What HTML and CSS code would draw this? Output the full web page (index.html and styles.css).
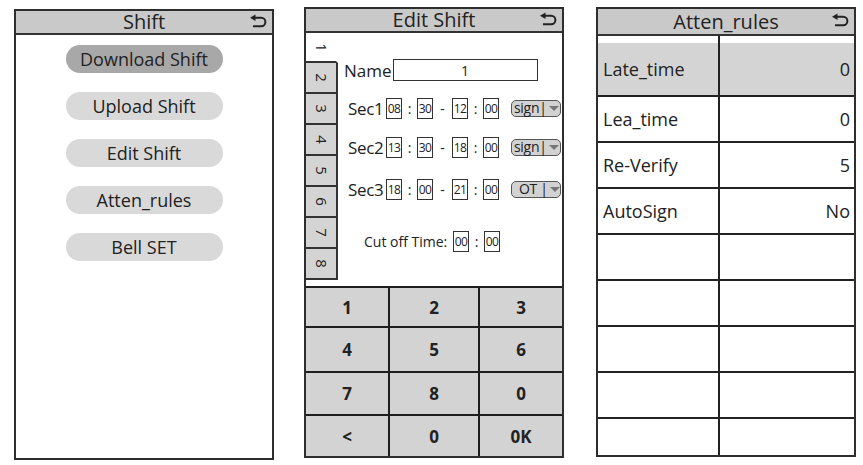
FILE: index.html
```html
<!DOCTYPE html>
<html>
<head>
<meta charset="utf-8">
<link rel="stylesheet" href="styles.css">
</head>
<body>
<div class="screens">
  <section class="panel panel-left">
    <header class="head">
      <span class="title">Shift</span>
      <svg class="back" viewBox="0 0 17 13" width="17" height="13"><path d="M4.5 2.8 H11.2 A4.2 4.2 0 0 1 11.2 11.2 H3" fill="none" stroke="#222" stroke-width="2"/><polygon points="0,2.8 5.5,-0.4 5.5,6" fill="#222"/></svg>
    </header>
    <div class="menu">
      <div class="pill selected">Download Shift</div>
      <div class="pill">Upload Shift</div>
      <div class="pill">Edit Shift</div>
      <div class="pill">Atten_rules</div>
      <div class="pill">Bell SET</div>
    </div>
  </section>

  <section class="panel panel-mid">
    <header class="head">
      <span class="title">Edit Shift</span>
      <svg class="back" viewBox="0 0 17 13" width="17" height="13"><path d="M4.5 2.8 H11.2 A4.2 4.2 0 0 1 11.2 11.2 H3" fill="none" stroke="#222" stroke-width="2"/><polygon points="0,2.8 5.5,-0.4 5.5,6" fill="#222"/></svg>
    </header>
    <div class="edit-body">
      <div class="tabs">
        <div class="tab active"><span>1</span></div>
        <div class="tab"><span>2</span></div>
        <div class="tab"><span>3</span></div>
        <div class="tab"><span>4</span></div>
        <div class="tab"><span>5</span></div>
        <div class="tab"><span>6</span></div>
        <div class="tab"><span>7</span></div>
        <div class="tab"><span>8</span></div>
      </div>
      <div class="form">
        <div class="row row-name">
          <span class="lbl">Name</span>
          <div class="name-box">1</div>
        </div>
        <div class="row row-sec1">
          <span class="lbl sec">Sec1</span>
          <span class="tbox">08</span><span class="sep">:</span><span class="tbox">30</span><span class="dash">-</span><span class="tbox">12</span><span class="sep">:</span><span class="tbox">00</span>
          <span class="drop"><span class="drop-txt">sign|</span><span class="tri"></span></span>
        </div>
        <div class="row row-sec2">
          <span class="lbl sec">Sec2</span>
          <span class="tbox">13</span><span class="sep">:</span><span class="tbox">30</span><span class="dash">-</span><span class="tbox">18</span><span class="sep">:</span><span class="tbox">00</span>
          <span class="drop"><span class="drop-txt">sign|</span><span class="tri"></span></span>
        </div>
        <div class="row row-sec3">
          <span class="lbl sec">Sec3</span>
          <span class="tbox">18</span><span class="sep">:</span><span class="tbox">00</span><span class="dash">-</span><span class="tbox">21</span><span class="sep">:</span><span class="tbox">00</span>
          <span class="drop"><span class="drop-txt ot">OT |</span><span class="tri"></span></span>
        </div>
        <div class="row row-cut">
          <span class="cut-lbl">Cut off Time:</span>
          <span class="tbox">00</span><span class="sep">:</span><span class="tbox">00</span>
        </div>
      </div>
    </div>
    <div class="keypad">
      <div class="key">1</div><div class="key">2</div><div class="key">3</div>
      <div class="key">4</div><div class="key">5</div><div class="key">6</div>
      <div class="key">7</div><div class="key">8</div><div class="key">0</div>
      <div class="key">&lt;</div><div class="key">0</div><div class="key">0K</div>
    </div>
  </section>

  <section class="panel panel-right">
    <header class="head head-tall">
      <span class="title">Atten_rules</span>
      <svg class="back" viewBox="0 0 17 13" width="17" height="13"><path d="M4.5 2.8 H11.2 A4.2 4.2 0 0 1 11.2 11.2 H3" fill="none" stroke="#222" stroke-width="2"/><polygon points="0,2.8 5.5,-0.4 5.5,6" fill="#222"/></svg>
    </header>
    <div class="rules">
      <div class="cell strip k"></div><div class="cell strip"></div>
      <div class="cell k hl first">Late_time</div><div class="cell v hl first">0</div>
      <div class="cell k">Lea_time</div><div class="cell v">0</div>
      <div class="cell k">Re-Verify</div><div class="cell v">5</div>
      <div class="cell k">AutoSign</div><div class="cell v">No</div>
      <div class="cell k"></div><div class="cell v"></div>
      <div class="cell k"></div><div class="cell v"></div>
      <div class="cell k"></div><div class="cell v"></div>
      <div class="cell k"></div><div class="cell v"></div>
      <div class="cell k last"></div><div class="cell v last"></div>
    </div>
  </section>
</div>
</body>
</html>
```
FILE: styles.css
```css
* { box-sizing: border-box; }
html, body { margin: 0; padding: 0; background: #ffffff; }
body {
  font-family: "Open Sans", "Noto Sans", sans-serif;
  color: #222;
  width: 863px;
  height: 465px;
  overflow: hidden;
}
.screens {
  display: flex;
  align-items: flex-start;
  padding-left: 14px;
}
.panel {
  width: 260px;
  border: 2px solid #2e2e2e;
  display: flex;
  flex-direction: column;
  background: #fff;
}
.panel-left { margin-top: 9px; height: 451px; }
.panel-mid { margin-left: 30px; margin-top: 7px; height: 451px; }
.panel-right { margin-left: 32px; margin-top: 7px; height: 450px; }

.head {
  height: 24px;
  flex: none;
  background: #c9c9c9;
  border-bottom: 2px solid #333;
  display: flex;
  align-items: center;
  justify-content: center;
  position: relative;
}
.head-tall { height: 27px; }
.title { font-size: 20px; line-height: 1; color: #222; }
.back { position: absolute; right: 5px; top: 4px; overflow: visible; }
.head-tall .back { top: 5px; }

/* left menu */
.menu {
  display: flex;
  flex-direction: column;
  align-items: center;
  gap: 19px;
  padding-top: 10px;
}
.pill {
  width: 157px;
  height: 28px;
  border-radius: 14px;
  background: #d9d9d9;
  font-size: 18px;
  display: flex;
  align-items: center;
  justify-content: center;
  color: #222;
}
.pill.selected { background: #a8a8a8; }

/* edit shift */
.edit-body { display: flex; flex: 1; }
.tabs { width: 32px; display: flex; flex-direction: column; flex: none; }
.tab {
  height: 31px;
  background: #d4d4d4;
  border-right: 2px solid #333;
  border-bottom: 2px solid #333;
  display: flex;
  align-items: center;
  justify-content: center;
}
.tab.active { height: 30px; background: #fff; border-right-color: transparent; }
.tab span { display: inline-block; transform: rotate(90deg); font-size: 15px; line-height: 1; }
.form { flex: 1; display: flex; flex-direction: column; padding-top: 26px; }
.row { display: flex; align-items: center; height: 22px; white-space: nowrap; }
.row-name { padding-left: 6px; }
.row-sec1 { margin-top: 16px; padding-left: 10px; }
.row-sec2 { margin-top: 17px; padding-left: 10px; }
.row-sec3 { margin-top: 20px; padding-left: 10px; }
.row-cut { margin-top: 30px; padding-left: 26px; }
.lbl { font-size: 17px; line-height: 1; }
.lbl.sec { width: 38px; font-size: 17px; letter-spacing: -0.3px; }
.name-box {
  width: 145px;
  height: 22px;
  border: 1px solid #333;
  font-size: 14px;
  display: flex;
  align-items: center;
  justify-content: center;
  margin-left: 1px;
}
.tbox {
  width: 16px;
  height: 21px;
  border: 1px solid #333;
  font-size: 12px;
  letter-spacing: -0.6px;
  display: flex;
  align-items: center;
  justify-content: center;
  white-space: nowrap;
}
.sep { width: 15px; text-align: center; font-size: 14px; }
.dash { width: 19px; text-align: center; font-size: 14px; }
.cut-lbl { width: 89px; font-size: 14px; white-space: nowrap; }
.drop {
  margin-left: 12px;
  width: 50px;
  height: 17px;
  border: 1px solid #555;
  border-radius: 5px;
  background: #d2d2d2;
  display: flex;
  align-items: center;
  padding-left: 2px;
  gap: 2px;
  white-space: nowrap;
}
.drop-txt { font-size: 14px; line-height: 1; letter-spacing: -0.3px; white-space: nowrap; }
.drop-txt.ot { padding-left: 5px; width: 34px; }
.tri {
  width: 0; height: 0;
  border-left: 5px solid transparent;
  border-right: 5px solid transparent;
  border-top: 5px solid #777;
}

.keypad {
  flex: none;
  display: grid;
  grid-template-columns: 82px 88px 1fr;
  grid-template-rows: 38px 43px 41px 1fr;
  gap: 2px;
  background: #1e1e1e;
  border-top: 2px solid #1e1e1e;
  height: 170px;
}
.key {
  background: #d3d3d3;
  display: flex;
  align-items: center;
  justify-content: center;
  font-weight: 700;
  font-size: 17px;
  color: #222;
}

/* atten rules */
.rules {
  flex: 1;
  display: grid;
  grid-template-columns: 122px 1fr;
  grid-template-rows: 7px 54px repeat(7, 46px) 1fr;
}
.cell {
  border-bottom: 2px solid #222;
  display: flex;
  align-items: center;
  font-size: 18px;
}
.cell.k { border-right: 2px solid #222; padding-left: 5px; }
.cell.v { justify-content: flex-end; padding-right: 4px; }
.cell.strip { border-bottom: none; }
.cell.hl { background: #d4d4d4; }
.cell.last { border-bottom: none; }
```
